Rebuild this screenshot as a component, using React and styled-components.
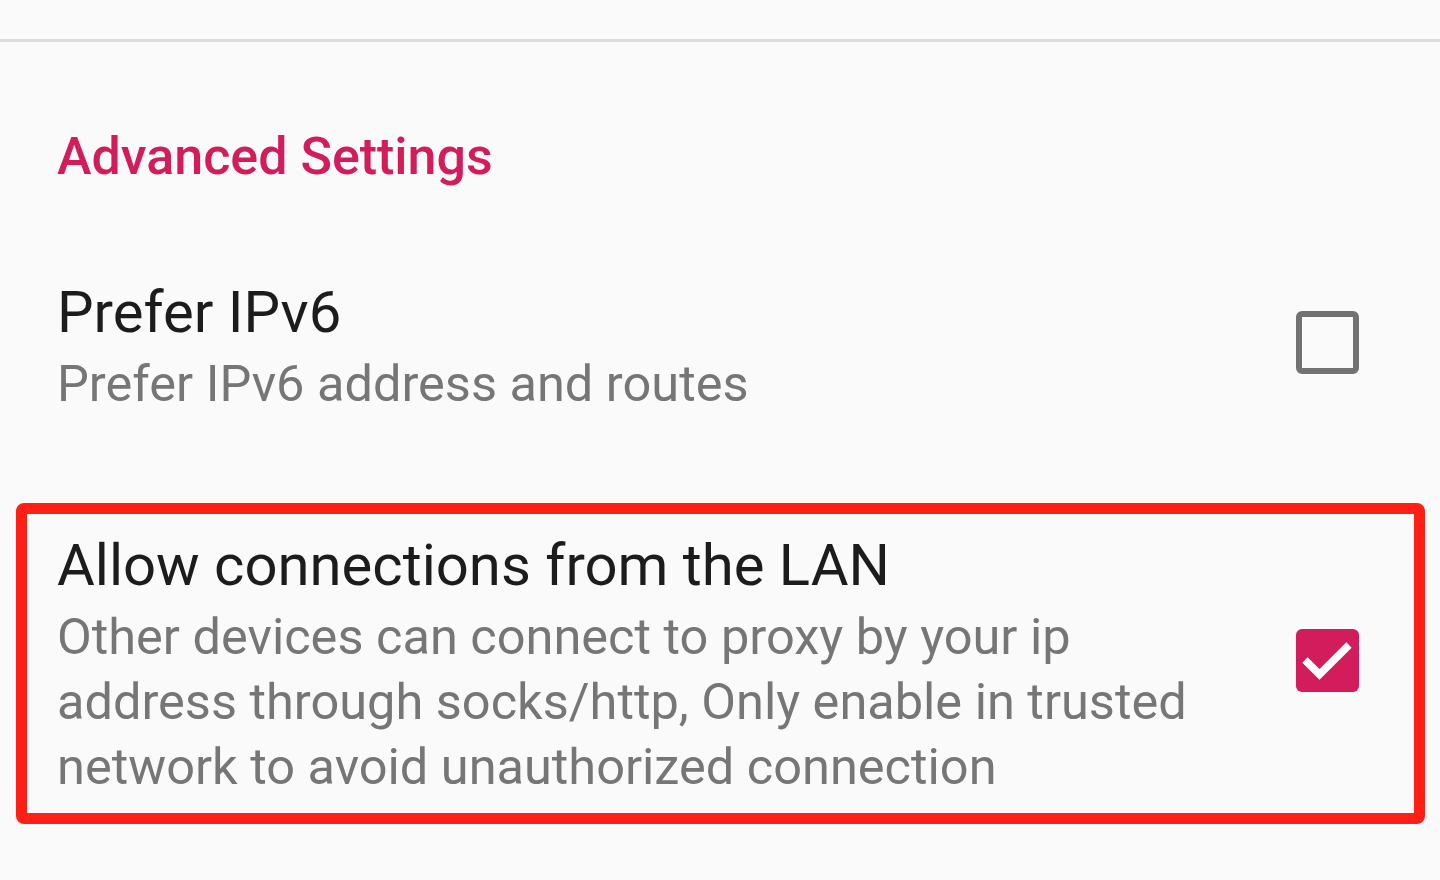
import React from 'react';
import styled, { createGlobalStyle } from 'styled-components';

const GlobalStyle = createGlobalStyle`
  html, body {
    margin: 0;
    padding: 0;
    background: #fafafa;
  }
  body {
    font-family: Roboto, "Noto Sans", sans-serif;
  }
`;

const Page = styled.div`
  min-height: 100vh;
  background: #fafafa;
`;

const TopBar = styled.div`
  height: 39px;
  border-bottom: 3px solid #dcdcdc;
`;

const SectionTitle = styled.h2`
  margin: 0;
  padding: 83px 0 0 57px;
  font-size: 52px;
  line-height: 64px;
  font-weight: 500;
  color: #d21c5b;
`;

const List = styled.div`
  display: flex;
  flex-direction: column;
  padding-top: 88px;
  gap: 87px;
`;

const Row = styled.div`
  display: flex;
  align-items: center;
  justify-content: space-between;
  padding: ${(p) => (p.$highlight ? '16px 55px 14px 30px' : '0 81px 0 57px')};
  margin: ${(p) => (p.$highlight ? '0 15px 0 16px' : '0')};
  border: ${(p) => (p.$highlight ? '11px solid #ff1f14' : 'none')};
  border-radius: 8px;
`;

const TextBlock = styled.div`
  display: flex;
  flex-direction: column;
  max-width: 1170px;
`;

const Title = styled.div`
  font-size: 58px;
  line-height: 70px;
  color: #1c1c1c;
`;

const Summary = styled.div`
  margin-top: 4px;
  font-size: 50.5px;
  line-height: 65px;
  color: #767676;
`;

const Box = styled.div`
  flex: none;
  width: 63px;
  height: 63px;
  margin-bottom: 9px;
  box-sizing: border-box;
  border-radius: 6px;
  border: ${(p) => (p.$checked ? 'none' : '6px solid #727272')};
  background: ${(p) => (p.$checked ? '#d21c5b' : 'transparent')};
  display: flex;
  align-items: center;
  justify-content: center;
`;

function Checkbox({ checked }) {
  return (
    <Box $checked={checked}>
      {checked && (
        <svg width="63" height="63" viewBox="0 0 63 63">
          <path d="M9 31 L23.5 45.5 L53 16" fill="none" stroke="#fff" strokeWidth="7.5" />
        </svg>
      )}
    </Box>
  );
}

function SettingRow({ title, summary, checked, highlight }) {
  return (
    <Row $highlight={highlight}>
      <TextBlock>
        <Title>{title}</Title>
        <Summary>{summary}</Summary>
      </TextBlock>
      <Checkbox checked={checked} />
    </Row>
  );
}

export default function App() {
  return (
    <Page>
      <GlobalStyle />
      <TopBar />
      <SectionTitle>Advanced Settings</SectionTitle>
      <List>
        <SettingRow title="Prefer IPv6" summary="Prefer IPv6 address and routes" />
        <SettingRow
          highlight
          checked
          title="Allow connections from the LAN"
          summary="Other devices can connect to proxy by your ip address through socks/http, Only enable in trusted network to avoid unauthorized connection"
        />
      </List>
    </Page>
  );
}
